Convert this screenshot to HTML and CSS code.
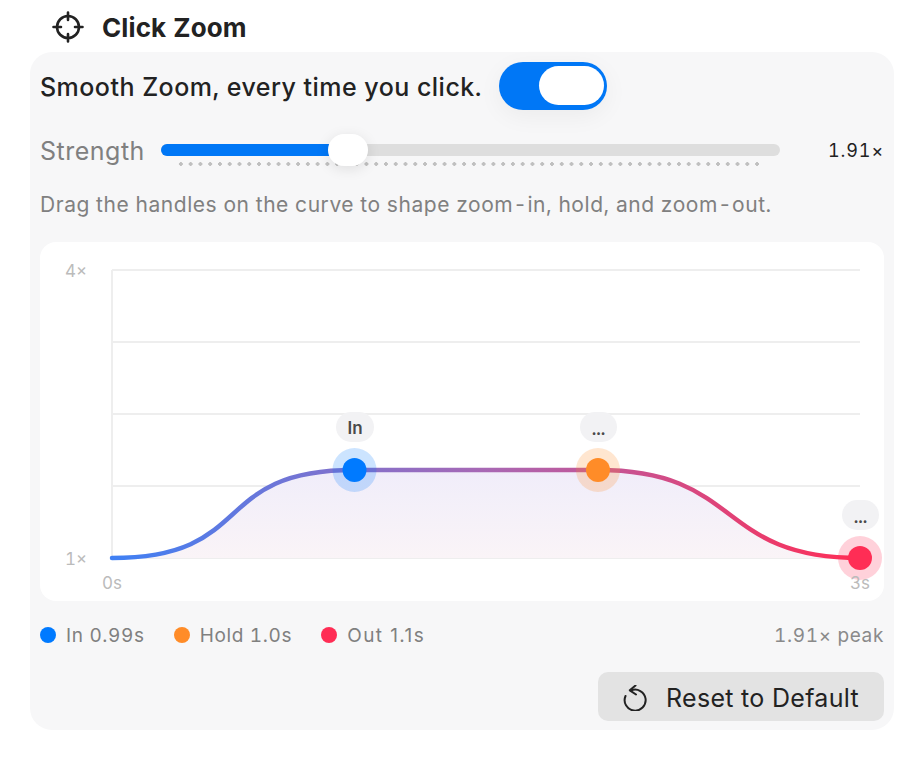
FILE: index.html
```html
<!DOCTYPE html>
<html lang="en">
<head>
    <meta charset="UTF-8">
    <title>Click Zoom</title>
    <link rel="stylesheet" href="styles.css">
</head>
<body>
    <header class="title-row">
        <svg class="title-icon" viewBox="0 0 32 32" fill="none" stroke="#222" stroke-width="2.6" stroke-linecap="round">
            <circle cx="16" cy="16" r="11"/>
            <path d="M16 1.5V9M16 23v7.5M1.5 16H9M23 16h7.5"/>
        </svg>
        <h1>Click Zoom</h1>
    </header>
    <main class="panel">
        <div class="toggle-row">
            <span class="headline">Smooth Zoom, every time you click.</span>
            <div class="toggle"><div class="toggle-knob"></div></div>
        </div>
        <div class="slider-row">
            <span class="slider-label">Strength</span>
            <div class="slider">
                <div class="track"><div class="track-fill"></div></div>
                <div class="ticks"></div>
                <div class="thumb"></div>
            </div>
            <span class="slider-value">1.91×</span>
        </div>
        <p class="hint">Drag the handles on the curve to shape zoom-in, hold, and zoom-out.</p>
        <section class="chart-card">
            <svg class="chart" viewBox="40 242 844 359">
                <defs>
                    <linearGradient id="stroke-grad" gradientUnits="userSpaceOnUse" x1="112" y1="0" x2="860" y2="0">
                        <stop offset="0" stop-color="#3f80f4"/>
                        <stop offset="0.5" stop-color="#a868b4"/>
                        <stop offset="1" stop-color="#ff2d55"/>
                    </linearGradient>
                    <linearGradient id="fill-grad" x1="0" y1="0" x2="0" y2="1">
                        <stop offset="0" stop-color="#f0edfa"/>
                        <stop offset="1" stop-color="#faf4f7"/>
                    </linearGradient>
                </defs>
                <path class="grid" d="M112 270V558M112 270H860M112 342H860M112 414H860M112 486H860M112 558H860"/>
                <path fill="url(#fill-grad)" d="M112 558C257 558 209 470 354 470H598C743 470 715 558 860 558Z"/>
                <path class="curve" stroke="url(#stroke-grad)" d="M112 558C257 558 209 470 354 470H598C743 470 715 558 860 558"/>

                <circle cx="354.500" cy="470" r="22" fill="#007aff" fill-opacity="0.2"/>
                <circle cx="354.500" cy="470" r="12" fill="#007aff"/>
                <circle cx="598" cy="470" r="22" fill="#ff8c28" fill-opacity="0.22"/>
                <circle cx="598" cy="470" r="12" fill="#ff8c28"/>
                <circle cx="860" cy="558" r="22" fill="#ff2d55" fill-opacity="0.22"/>
                <circle cx="860" cy="558" r="12" fill="#ff2d55"/>

                <rect class="pill" x="336" y="412" width="38" height="30" rx="15"/>
                <text class="pill-text" x="355" y="434">In</text>
                <rect class="pill" x="580" y="412" width="37" height="30" rx="15"/>
                <text class="pill-text" x="598.500" y="435">...</text>
                <rect class="pill" x="842" y="500" width="37" height="30" rx="15"/>
                <text class="pill-text" x="860.500" y="523">...</text>

                <text class="axis" x="65" y="277">4×</text>
                <text class="axis" x="65" y="565">1×</text>
                <text class="axis" x="102" y="589">0s</text>
                <text class="axis" x="850" y="589">3s</text>
            </svg>
        </section>
        <div class="legend-row">
            <div class="legend">
                <span class="legend-item"><i class="dot dot-in"></i>In 0.99s</span>
                <span class="legend-item"><i class="dot dot-hold"></i>Hold 1.0s</span>
                <span class="legend-item"><i class="dot dot-out"></i>Out 1.1s</span>
            </div>
            <span class="peak">1.91× peak</span>
        </div>
        <div class="actions">
            <button class="reset-btn">
                <svg class="reset-icon" viewBox="623 685 26 26" fill="none" stroke="#222" stroke-width="2" stroke-linecap="round" stroke-linejoin="round">
                    <path d="M625.500 696A10.500 10.500 0 1 0 631 690.500"/>
                    <path d="M635.500 685.500L629.800 690.300L636 694.500"/>
                </svg>
                Reset to Default
            </button>
        </div>
    </main>
</body>
</html>
```

FILE: styles.css
```css
*{
    margin:0;
    padding:0;
    box-sizing: border-box;
}
body{
    background: #fff;
    font-family: Inter, 'Liberation Sans', sans-serif;
    font-variant-numeric: tabular-nums;
    color: #222;
}
.title-row{
    display: flex;
    align-items: center;
    height: 52px;
    padding: 2px 0 0 52px;
}
.title-icon{
    width: 32px;
    height: 32px;
}
h1{
    margin-left: 18px;
    font-size: 26px;
    font-weight: 700;
    letter-spacing: 0.1px;
}
.panel{
    width: 864px;
    height: 678px;
    margin-left: 30px;
    padding: 10px 10px 0 10px;
    background: #f7f7f8;
    border-radius: 22px;
}
.toggle-row{
    display: flex;
    align-items: center;
    height: 48px;
}
.headline{
    width: 459px;
    padding-top: 2px;
    font-size: 25px;
    font-weight: 500;
    letter-spacing: 0.47px;
}
.toggle{
    width: 108px;
    height: 48px;
    padding: 4px 3px;
    background: #0077f6;
    border-radius: 24px;
    box-shadow: 0 6px 24px rgba(0,0,0,0.05);
}
.toggle-knob{
    width: 65px;
    height: 39px;
    margin-left: 37px;
    background: #fff;
    border-radius: 20px;
}
.slider-row{
    display: flex;
    align-items: center;
    height: 32px;
    margin-top: 24px;
}
.slider-label{
    width: 121px;
    padding-top: 2px;
    font-size: 25px;
    letter-spacing: 0.5px;
    color: #808080;
}
.slider{
    position: relative;
    width: 619px;
    height: 32px;
    padding-top: 10px;
}
.track{
    height: 12px;
    background: #dedede;
    border-radius: 6px;
}
.track-fill{
    width: 180px;
    height: 12px;
    background: #0077f6;
    border-radius: 6px 0 0 6px;
}
.ticks{
    height: 4px;
    margin: 6px 18px 0 15px;
    background-image: radial-gradient(circle, #c0c0c0 1.7px, transparent 2px);
    background-size: 9.77px 4px;
}
.thumb{
    position: absolute;
    left: 167px;
    top: 0;
    width: 40px;
    height: 32px;
    background: #fff;
    border-radius: 16px;
    box-shadow: 0 3px 14px rgba(0,0,0,0.1);
}
.slider-value{
    flex: 1;
    text-align: right;
    font-size: 18px;
    letter-spacing: 0.9px;
}
.hint{
    margin-top: 26px;
    font-size: 21px;
    letter-spacing: 0.55px;
    color: #808080;
}
.chart-card{
    width: 844px;
    height: 359px;
    margin-top: 25px;
    background: #fff;
    border-radius: 16px;
}
.chart{
    display: block;
    width: 844px;
    height: 359px;
}
.grid{
    fill: none;
    stroke: #eeeeee;
    stroke-width: 2;
}
.curve{
    fill: none;
    stroke-width: 4.5;
    stroke-linecap: round;
}
.pill{
    fill: #f2f2f4;
}
.pill-text{
    font-size: 17px;
    font-weight: 600;
    fill: #4a4a4a;
    text-anchor: middle;
}
.axis{
    font-size: 17px;
    fill: #bbbbbb;
}
.legend-row{
    display: flex;
    justify-content: space-between;
    align-items: center;
    height: 24px;
    margin-top: 22px;
    font-size: 19px;
    letter-spacing: 0.65px;
    color: #808080;
}
.legend{
    display: flex;
}
.legend-item{
    display: flex;
    align-items: center;
    margin-right: 29px;
}
.legend-item:last-child{
    font-variant-numeric: normal;
    letter-spacing: 1.4px;
}
.dot{
    width: 16px;
    height: 16px;
    margin-right: 10px;
    border-radius: 50%;
}
.dot-in{
    background: #007aff;
}
.dot-hold{
    background: #ff8c28;
}
.dot-out{
    background: #ff2d55;
}
.peak{
    color: #8a8a8a;
}
.actions{
    display: flex;
    justify-content: flex-end;
    margin-top: 25px;
}
.reset-btn{
    display: flex;
    align-items: center;
    width: 286px;
    height: 49px;
    padding: 2px 0 0 25px;
    border: none;
    border-radius: 10px;
    background: #e3e3e3;
    font-family: inherit;
    font-size: 25px;
    letter-spacing: 0.3px;
    color: #222;
}
.reset-icon{
    width: 26px;
    height: 26px;
    margin-right: 17px;
}
```
